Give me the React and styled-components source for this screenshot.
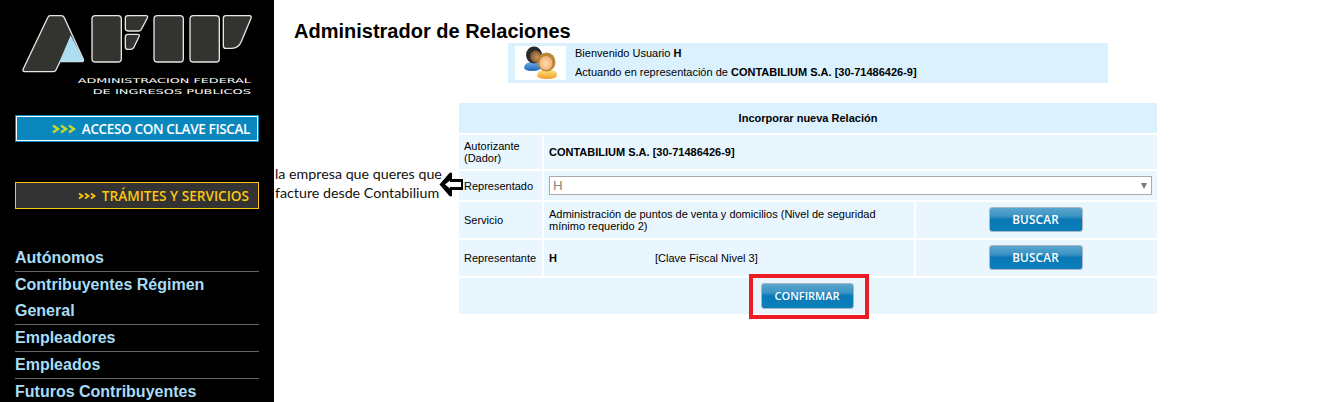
import React from "react";
import styled, { createGlobalStyle } from "styled-components";

const Global = createGlobalStyle`
  html, body { margin: 0; padding: 0; background: #fff; }
  body { width: 1341px; height: 402px; overflow: hidden; font-family: "Liberation Sans", Arial, sans-serif; }
`;

const Page = styled.div`
  position: relative;
  display: flex;
  width: 1341px;
  height: 402px;
  overflow: hidden;
`;

const Sidebar = styled.aside`
  flex: 0 0 274px;
  height: 402px;
  background: #000;
  display: flex;
  flex-direction: column;
  overflow: hidden;
`;

const LogoSvg = styled.svg`
  display: block;
  flex: none;
  width: 274px;
  height: 100px;
  margin-bottom: 15px;
`;

const SideButton = styled.div`
  box-sizing: border-box;
  flex: none;
  width: 244px;
  height: 27px;
  margin-left: 15px;
  display: flex;
  align-items: center;
  justify-content: flex-end;
  font-family: "Open Sans", sans-serif;
  font-weight: 600;
  white-space: nowrap;
  background: ${(p) => (p.$tone === "blue" ? "#0a88bd" : "#333333")};
  color: ${(p) => (p.$tone === "blue" ? "#ffffff" : "#fdc70f")};
  border: 1px solid ${(p) => (p.$tone === "blue" ? "#0a88bd" : "#fdc70f")};
  box-shadow: ${(p) => (p.$tone === "blue" ? "inset 0 0 0 1px #ffffff" : "none")};
  font-size: ${(p) => (p.$tone === "blue" ? "13.5px" : "13.6px")};
  letter-spacing: ${(p) => (p.$tone === "blue" ? "-0.35px" : "0")};
  padding-right: ${(p) => (p.$tone === "blue" ? "8px" : "9px")};
  margin-top: ${(p) => p.$top || 0}px;
`;

const Chevrons = styled.svg`
  display: block;
  flex: none;
  margin-right: 4px;
`;

const Menu = styled.nav`
  flex: none;
  margin: 36px 15px 0;
  width: 244px;
`;

const MenuItem = styled.div`
  font-size: 16px;
  font-weight: 700;
  line-height: 26px;
  color: #a8dcf5;
  border-bottom: 1px solid #666;
  &:last-child { border-bottom: 0; }
`;

const Main = styled.main`
  flex: 1;
  padding-left: 20px;
  display: flex;
  flex-direction: column;
`;

const Title = styled.h1`
  margin: 19px 0 0;
  font-size: 20px;
  line-height: 24px;
  font-weight: 700;
  color: #000;
`;

const Content = styled.div`
  width: 698px;
  margin-left: 165px;
  display: flex;
  flex-direction: column;
  align-items: center;
`;

const Welcome = styled.section`
  box-sizing: border-box;
  width: 600px;
  height: 40px;
  background: #dbf1fe;
  display: flex;
  padding: 3px 7px;
  gap: 9px;
  font-size: 11px;
  color: #000;
`;

const Avatar = styled.div`
  flex: 0 0 51px;
  height: 34px;
  background: #fff;
  display: flex;
  align-items: center;
  justify-content: center;
`;

const WelcomeText = styled.div`
  display: flex;
  flex-direction: column;
  align-self: center;
  line-height: 19px;
`;

const Grid = styled.section`
  margin-top: 20px;
  width: 698px;
  display: grid;
  grid-template-columns: 83px 370px 241px;
  grid-template-rows: 30px 34px 29px 36px 36px 36px;
  gap: 2px;
  font-size: 11px;
  color: #000;
  line-height: 12px;
`;

const Cell = styled.div`
  background: #e9f6fe;
  display: flex;
  align-items: center;
  box-sizing: border-box;
  padding: 0 5px;
  grid-column: ${(p) => p.$span || "auto"};
`;

const HeaderCell = styled(Cell)`
  background: #dbf1fe;
  justify-content: center;
  font-weight: 700;
`;

const CenterCell = styled(Cell)`
  justify-content: center;
  padding: 0 6px 0 4px;
`;

const Strong = styled.b`
  font-weight: 700;
`;

const HolderName = styled.b`
  font-weight: 700;
  width: 106px;
`;

const Select = styled.div`
  box-sizing: border-box;
  width: 100%;
  height: 19px;
  border: 1px solid #a9a9a9;
  background: #fff;
  display: flex;
  align-items: center;
  justify-content: space-between;
  padding: 0 4px 0 3px;
  color: #8a8378;
  font-size: 13.3px;
`;

const Caret = styled.span`
  width: 0;
  height: 0;
  border-left: 3.5px solid transparent;
  border-right: 3.5px solid transparent;
  border-top: 6px solid #777;
`;

const ActionButton = styled.button`
  box-sizing: border-box;
  width: ${(p) => p.$w || 94}px;
  height: ${(p) => p.$h || 25}px;
  margin-bottom: ${(p) => (p.$h ? 0 : 1)}px;
  border: 1px solid #a9b9c4;
  border-radius: 3px;
  padding: 0 0 1px;
  font-family: "Open Sans", sans-serif;
  font-weight: 600;
  font-size: ${(p) => (p.$h ? "11px" : "11.7px")};
  letter-spacing: ${(p) => (p.$h ? "0" : "0.2px")};
  color: #fff;
  background: linear-gradient(#5aa5cd 0%, #3d95c4 35%, #0a79b6 50%, #0a7fbc 100%);
`;

const HighlightBox = styled.div`
  box-sizing: border-box;
  position: absolute;
  left: 749px;
  top: 274px;
  width: 120px;
  height: 45px;
  border: 4px solid #ed1c24;
  pointer-events: none;
`;

const Note = styled.div`
  position: absolute;
  left: 275px;
  top: 164px;
  font-family: "Lato", sans-serif;
  font-size: 14.25px;
  line-height: 19px;
  color: #111;
  white-space: nowrap;
`;

const NoteArrow = styled.svg`
  position: absolute;
  left: 439px;
  top: 172px;
`;

function Logo() {
  const base = { fill: "#33342f", stroke: "#e6e6e6", strokeWidth: 4, strokeLinejoin: "round" };
  return (
    <LogoSvg viewBox="0 0 822 300" aria-label="AFIP">
      <path {...base} d="M150 47 H184 Q190 47 193 53 L250 178 Q252 185 245 185 H180 L168 210 Q166 215 160 215 H75 Q66 215 70 206 L143 53 Q146 47 150 47 Z" />
      <path d="M212 106 L250 178 Q252 185 245 185 H178 Z" fill="#aedcf0" />
      <rect {...base} x="276" y="47" width="88" height="139" rx="10" />
      <path {...base} d="M384 47 H438 Q445 47 442 54 L424 88 Q421 93 415 93 H384 Q376 93 376 85 V55 Q376 47 384 47 Z" />
      <path {...base} d="M384 103 H413 Q420 103 417 110 L401 143 Q398 148 392 148 H384 Q376 148 376 140 V111 Q376 103 384 103 Z" />
      <rect {...base} x="462" y="47" width="88" height="139" rx="10" />
      <rect {...base} x="570" y="47" width="88" height="139" rx="10" />
      <path {...base} d="M678 47 H748 Q756 47 753 55 L725 122 Q716 145 695 145 H678 Q670 145 670 137 V55 Q670 47 678 47 Z" />
      <text x="233" y="248" fontFamily="'DejaVu Sans', sans-serif" fontSize="20" fill="#ffffff" textLength="520" lengthAdjust="spacingAndGlyphs">ADMINISTRACION FEDERAL</text>
      <text x="278" y="282" fontFamily="'DejaVu Sans', sans-serif" fontSize="20" fill="#ffffff" textLength="475" lengthAdjust="spacingAndGlyphs">DE INGRESOS PUBLICOS</text>
    </LogoSvg>
  );
}

function ChevronRow({ width, height, color, size, step, stroke }) {
  return (
    <Chevrons width={width} height={height} viewBox={`0 0 ${width} ${height}`}>
      {[0, 1, 2].map((i) => (
        <path
          key={i}
          d={`M${1 + i * step} 1.5 L${1 + i * step + size} ${height / 2} L${1 + i * step} ${height - 1.5}`}
          fill="none"
          stroke={color}
          strokeWidth={stroke}
        />
      ))}
    </Chevrons>
  );
}

function UsersIcon() {
  return (
    <svg width="34" height="34" viewBox="0 0 34 34">
      <defs>
        <radialGradient id="skinA" cx="0.6" cy="0.55" r="0.6">
          <stop offset="0" stopColor="#c79562" />
          <stop offset="1" stopColor="#7a4e28" />
        </radialGradient>
        <radialGradient id="skinB" cx="0.45" cy="0.55" r="0.6">
          <stop offset="0" stopColor="#ffdcb5" />
          <stop offset="1" stopColor="#f0a868" />
        </radialGradient>
        <linearGradient id="bodyA" x1="0" y1="0" x2="0" y2="1">
          <stop offset="0" stopColor="#6fb0ea" />
          <stop offset="1" stopColor="#1f64b8" />
        </linearGradient>
        <linearGradient id="bodyB" x1="0" y1="0" x2="0" y2="1">
          <stop offset="0" stopColor="#ffe27a" />
          <stop offset="1" stopColor="#f09a2c" />
        </linearGradient>
      </defs>
      <path d="M0 21 Q1 17 6 16 H12 Q17 17 17 21 Q17 25 8 25 Q0 25 0 21 Z" fill="url(#bodyA)" />
      <ellipse cx="10" cy="9" rx="8" ry="8.5" fill="#2a2a2a" />
      <ellipse cx="11.5" cy="10.5" rx="5.5" ry="6" fill="url(#skinA)" />
      <path d="M13 29 Q14 25 19 24 H28 Q33 25 33 29 Q33 33 23 33 Q13 33 13 29 Z" fill="url(#bodyB)" />
      <ellipse cx="22.5" cy="16" rx="9" ry="9.5" fill="#b9873a" />
      <ellipse cx="22" cy="17" rx="6.5" ry="7" fill="url(#skinB)" />
    </svg>
  );
}

export default function App() {
  return (
    <Page>
      <Global />
      <Sidebar>
        <Logo />
        <SideButton $tone="blue">
          <ChevronRow width={26} height={10} color="#c5d92d" size={5} step={8} stroke={2.4} />
          ACCESO CON CLAVE FISCAL
        </SideButton>
        <SideButton $tone="yellow" $top={40}>
          <ChevronRow width={20} height={8} color="#fdc70f" size={3.5} step={6} stroke={1.8} />
          TRÁMITES Y SERVICIOS
        </SideButton>
        <Menu>
          <MenuItem>Autónomos</MenuItem>
          <MenuItem>Contribuyentes Régimen General</MenuItem>
          <MenuItem>Empleadores</MenuItem>
          <MenuItem>Empleados</MenuItem>
          <MenuItem>Futuros Contribuyentes</MenuItem>
        </Menu>
      </Sidebar>
      <Main>
        <Title>Administrador de Relaciones</Title>
        <Content>
          <Welcome>
            <Avatar>
              <UsersIcon />
            </Avatar>
            <WelcomeText>
              <span>Bienvenido Usuario <Strong>H</Strong></span>
              <span>Actuando en representación de <Strong>CONTABILIUM S.A. [30-71486426-9]</Strong></span>
            </WelcomeText>
          </Welcome>
          <Grid>
            <HeaderCell $span="1 / -1">Incorporar nueva Relación</HeaderCell>
            <Cell>Autorizante<br />(Dador)</Cell>
            <Cell $span="2 / -1"><Strong>CONTABILIUM S.A. [30-71486426-9]</Strong></Cell>
            <Cell>Representado</Cell>
            <Cell $span="2 / -1">
              <Select>H<Caret /></Select>
            </Cell>
            <Cell>Servicio</Cell>
            <Cell>Administración de puntos de venta y domicilios (Nivel de seguridad mínimo requerido 2)</Cell>
            <CenterCell><ActionButton>BUSCAR</ActionButton></CenterCell>
            <Cell>Representante</Cell>
            <Cell><HolderName>H</HolderName>[Clave Fiscal Nivel 3]</Cell>
            <CenterCell><ActionButton>BUSCAR</ActionButton></CenterCell>
            <CenterCell $span="1 / -1"><ActionButton $w={93} $h={26}>CONFIRMAR</ActionButton></CenterCell>
          </Grid>
        </Content>
      </Main>
      <Note>la empresa que queres que<br />facture desde Contabilium</Note>
      <NoteArrow width="25" height="25" viewBox="0 0 25 25">
        <path d="M0.5 12.5 L10 1.5 Q11 0.5 12 0.5 L13 1 V7 H24 V18 H13 V24 L12 24.5 Q11 24.5 10 23.5 Z" fill="#000" />
        <path d="M6 12.5 L11 8.5 V10 H22 V15 H11 V16.5 Z" fill="#fff" />
      </NoteArrow>
      <HighlightBox />
    </Page>
  );
}
